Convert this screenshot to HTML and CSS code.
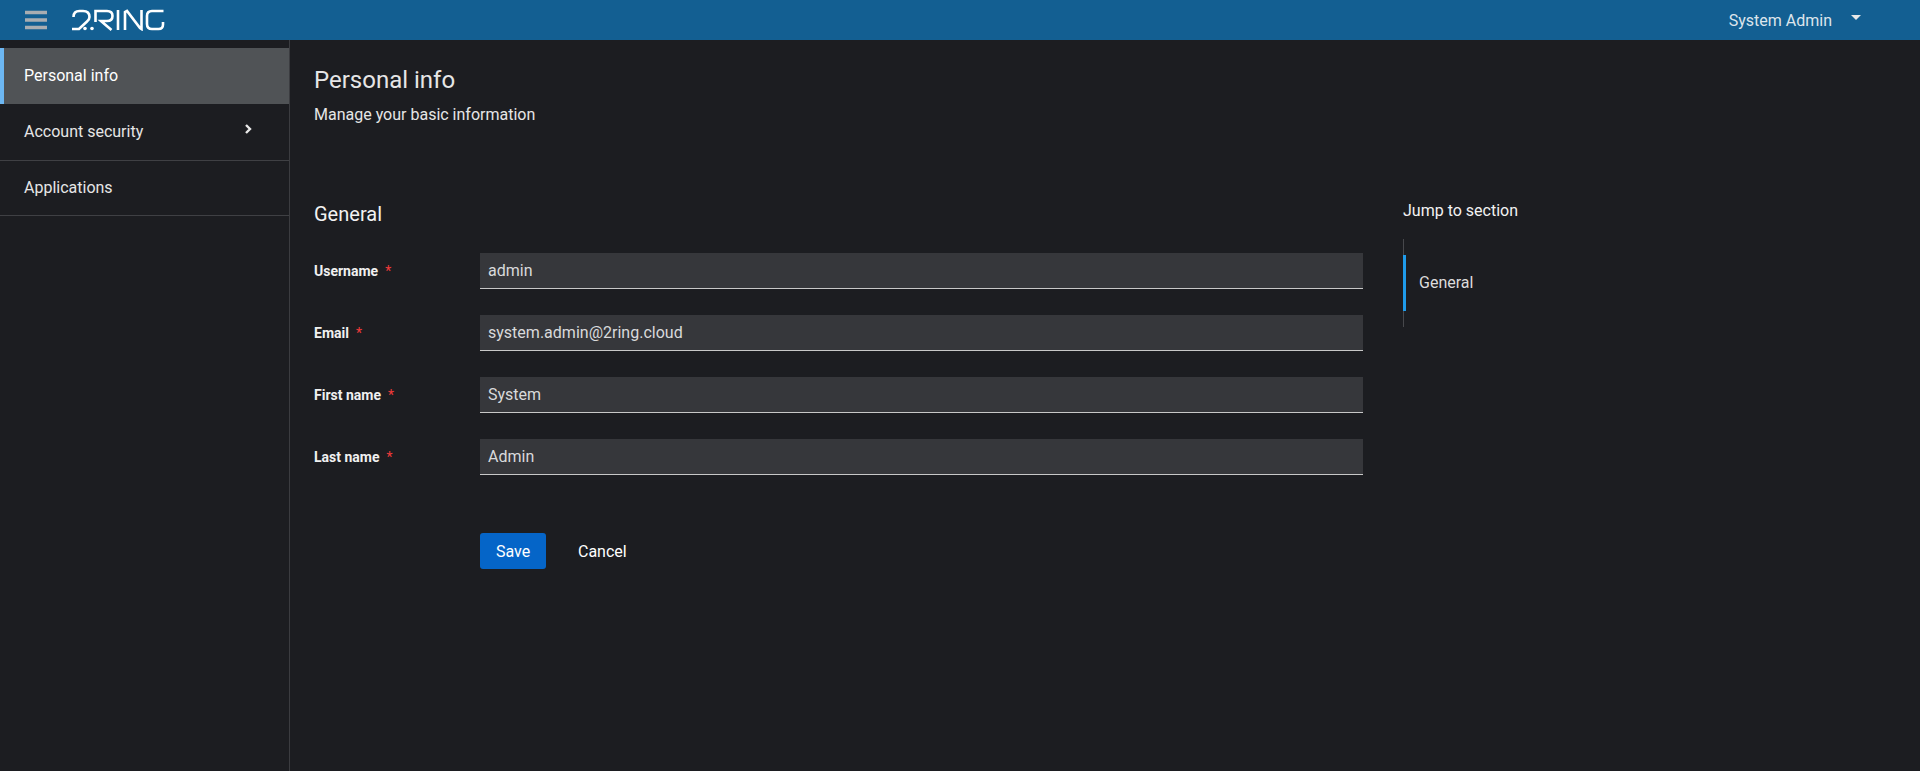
FILE: index.html
```html
<!DOCTYPE html>
<html lang="en">
<head>
<meta charset="utf-8">
<title>Personal info</title>
<link rel="stylesheet" href="styles.css">
</head>
<body>
<header class="topbar">
  <div class="brand">
    <svg class="burger" width="22" height="20" viewBox="0 0 22 20"><path d="M0 2.500H22M0 10H22M0 17.500H22" stroke="#a9adb1" stroke-width="3.500" fill="none"/></svg>
    <svg class="logo" width="93" height="22" viewBox="0 0 93 22" fill="none" stroke="#fff" stroke-width="2.600">
      <path d="M1.500 8Q1.500 2 7.500 2H11Q17.500 2 17.500 8Q17.500 10.500 15 12.500L7 20H0"/>
      <circle cx="13" cy="19.500" r="1.800" fill="#fff" stroke="none"/>
      <circle cx="20" cy="19.500" r="1.800" fill="#fff" stroke="none"/>
      <path d="M23.500 13V2H35Q40.500 2 40.500 7Q40.500 12 35 12H29L39.500 21"/>
      <path d="M46 1V21"/>
      <path d="M53 21V3L55 2L68 19L69.500 20V1"/>
      <path d="M91.500 2H80Q75 2 75 7V15Q75 20 80 20H86.500Q91 20 91 15.500V13"/>
    </svg>
  </div>
  <div class="user">
    <span>System Admin</span>
    <span class="caret"></span>
  </div>
</header>
<div class="body">
  <nav class="side">
    <a class="item active">Personal info</a>
    <a class="item line first">Account security
      <svg class="chev" width="7" height="10" viewBox="0 0 7 10"><path d="M1 1L5 5L1 9" stroke="#e8e8e8" stroke-width="2.400" fill="none"/></svg>
    </a>
    <a class="item line">Applications</a>
  </nav>
  <main class="main">
    <h1 class="title">Personal info</h1>
    <p class="sub">Manage your basic information</p>
    <div class="cols">
      <section class="form">
        <h2 class="section">General</h2>
        <div class="row"><label class="lab">Username<span class="req">*</span></label><div class="field">admin</div></div>
        <div class="row"><label class="lab">Email<span class="req">*</span></label><div class="field wide">system.admin@2ring.cloud</div></div>
        <div class="row"><label class="lab">First name<span class="req">*</span></label><div class="field">System</div></div>
        <div class="row"><label class="lab">Last name<span class="req">*</span></label><div class="field">Admin</div></div>
        <div class="actions">
          <button class="btn primary">Save</button>
          <button class="btn plain">Cancel</button>
        </div>
      </section>
      <aside class="jump">
        <div class="jump-title">Jump to section</div>
        <div class="jump-list"><div class="jump-item">General</div></div>
      </aside>
    </div>
  </main>
</div>
</body>
</html>
```

FILE: styles.css
```css
* { box-sizing: border-box; }
html, body { margin: 0; height: 100%; }
body {
  background: #1c1d21;
  color: #e4e5e6;
  font-family: Roboto, "Liberation Sans", sans-serif;
  font-size: 16px;
  overflow: hidden;
}
.topbar {
  height: 40px;
  background: #135f92;
  display: flex;
  align-items: center;
  justify-content: space-between;
}
.brand { display: flex; align-items: center; padding-left: 25px; }
.burger { display: block; }
.logo { display: block; margin-left: 25px; }
.user { display: flex; align-items: center; padding-right: 59px; color: #dde5ec; }
.caret {
  width: 0; height: 0; margin: 0 0 5px 19px;
  border-left: 5px solid transparent;
  border-right: 5px solid transparent;
  border-top: 5px solid #e8e8e8;
}
.body { display: flex; height: 731px; }
.side {
  width: 290px;
  flex: none;
  padding-top: 8px;
  border-right: 1px solid #3b3c40;
}
.item {
  display: flex;
  align-items: center;
  justify-content: space-between;
  height: 56px;
  padding: 0 37px 0 24px;
  color: #e6e6e6;
}
.item.active {
  background: #505356;
  border-left: 4px solid #6db7f2;
  padding: 0 0 2px 20px;
  color: #fff;
}
.item.line { border-bottom: 1px solid #3f4044; height: 57px; padding-bottom: 2px; }
.item.line:last-child { height: 55px; padding-bottom: 1px; }
.chev { margin-top: -4px; }
.main { flex: 1; padding: 25px 0 0 24px; }
.title { margin: 0; font-size: 24px; font-weight: 400; line-height: 30px; color: #e6e6e6; }
.sub { margin: 8px 0 0; font-size: 16px; line-height: 24px; color: #e6e6e6; }
.cols { display: flex; margin-top: 74px; }
.form { width: 1049px; }
.section { margin: 1px 0 27px; font-size: 20px; font-weight: 400; line-height: 24px; color: #f2f2f2; }
.row { display: flex; align-items: center; height: 36px; margin-bottom: 26px; }
.lab { width: 166px; flex: none; font-size: 14px; font-weight: 700; color: #f0f0f0; }
.req { color: #f03a3a; margin-left: 7px; font-weight: 400; }
.field {
  flex: 1;
  height: 36px;
  padding: 0 8px;
  line-height: 35px;
  background: #36373b;
  border-bottom: 1px solid #c8c8c8;
  color: #d9dadb;
}
.field.wide { letter-spacing: 0.01px; }
.actions { display: flex; align-items: center; margin: 58px 0 0 166px; }
.btn { font: inherit; border: 0; height: 36px; color: #fff; background: none; padding: 0; }
.primary { width: 66px; background: #0565c8; border-radius: 3px; }
.plain { margin-left: 32px; }
.jump { margin-left: 40px; }
.jump-title { font-size: 16px; line-height: 24px; margin-top: -2px; color: #f2f2f2; }
.jump-list { margin-top: 16px; border-left: 1px solid #47484c; padding: 16px 0; }
.jump-item {
  height: 56px;
  margin-left: -1px;
  border-left: 3px solid #1f9bea;
  padding-left: 13px;
  line-height: 56px;
  font-size: 16px;
  color: #dcdcdc;
}
```
